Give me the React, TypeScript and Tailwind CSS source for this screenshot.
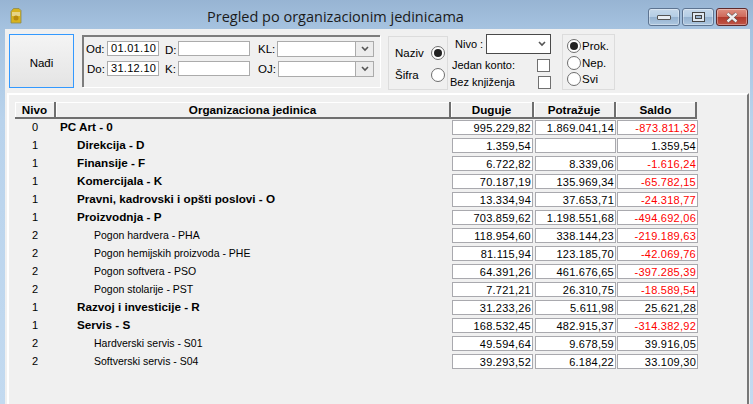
import type { ReactNode } from 'react'

const rows = [
  { n: '0', name: 'PC Art - 0', lvl: 0, d: '995.229,82', p: '1.869.041,14', s: '-873.811,32' },
  { n: '1', name: 'Direkcija - D', lvl: 1, d: '1.359,54', p: '', s: '1.359,54' },
  { n: '1', name: 'Finansije - F', lvl: 1, d: '6.722,82', p: '8.339,06', s: '-1.616,24' },
  { n: '1', name: 'Komercijala - K', lvl: 1, d: '70.187,19', p: '135.969,34', s: '-65.782,15' },
  { n: '1', name: 'Pravni, kadrovski i opšti poslovi - O', lvl: 1, d: '13.334,94', p: '37.653,71', s: '-24.318,77' },
  { n: '1', name: 'Proizvodnja - P', lvl: 1, d: '703.859,62', p: '1.198.551,68', s: '-494.692,06' },
  { n: '2', name: 'Pogon hardvera - PHA', lvl: 2, d: '118.954,60', p: '338.144,23', s: '-219.189,63' },
  { n: '2', name: 'Pogon hemijskih proizvoda - PHE', lvl: 2, d: '81.115,94', p: '123.185,70', s: '-42.069,76' },
  { n: '2', name: 'Pogon softvera - PSO', lvl: 2, d: '64.391,26', p: '461.676,65', s: '-397.285,39' },
  { n: '2', name: 'Pogon stolarije - PST', lvl: 2, d: '7.721,21', p: '26.310,75', s: '-18.589,54' },
  { n: '1', name: 'Razvoj i investicije - R', lvl: 1, d: '31.233,26', p: '5.611,98', s: '25.621,28' },
  { n: '1', name: 'Servis - S', lvl: 1, d: '168.532,45', p: '482.915,37', s: '-314.382,92' },
  { n: '2', name: 'Hardverski servis - S01', lvl: 2, d: '49.594,64', p: '9.678,59', s: '39.916,05' },
  { n: '2', name: 'Softverski servis - S04', lvl: 2, d: '39.293,52', p: '6.184,22', s: '33.109,30' },
]

function Radio({ on }: { on?: boolean }) {
  return (
    <span className="flex h-[14px] w-[14px] shrink-0 items-center justify-center rounded-full border border-[#6e6e6e] bg-white">
      {on && <span className="h-[8px] w-[8px] rounded-full bg-[#222]" />}
    </span>
  )
}

function Check() {
  return <span className="block h-[13px] w-[13px] border border-[#707070] bg-white" />
}

function TextBox({ w, children }: { w: string; children?: ReactNode }) {
  return (
    <div className={`${w} flex h-[15px] items-center border border-[#ababab] bg-white pl-[3px] tracking-[0.3px]`}>
      {children}
    </div>
  )
}

function Combo({ w }: { w: string }) {
  return (
    <div className={`${w} mt-[1px] flex h-[16px] border border-[#ababab] bg-white`}>
      <div className="flex-1" />
      <div className="flex w-[18px] items-center justify-center border-l border-[#ababab] bg-[#ececec]">
        <Chevron />
      </div>
    </div>
  )
}

function Chevron() {
  return (
    <svg width="8" height="6" viewBox="0 0 8 6">
      <path d="M1 1l3 3 3-3" fill="none" stroke="#555" strokeWidth="1.6" />
    </svg>
  )
}

function Head({ w, children }: { w: string; children: ReactNode }) {
  return (
    <div className={`${w} flex h-[17px] items-center justify-center border-r-2 border-b-2 border-[#6f6f6f] bg-[#f0f0f0] text-[11.7px] font-bold shadow-[inset_1px_1px_0_#fff]`}>
      {children}
    </div>
  )
}

function Amount({ v, red }: { v: string; red?: boolean }) {
  return (
    <div className={`flex h-[15px] w-[81px] items-center justify-end border border-[#a9a9ae] bg-white pr-[1px] tracking-[0.25px] ${red ? 'text-[#f00]' : 'text-black'}`}>
      {v}
    </div>
  )
}

function WinBtn({ w, children, red }: { w: string; children: ReactNode; red?: boolean }) {
  return (
    <div className={`${w} flex h-[18px] items-center justify-center rounded-[3px] border ${red ? 'border-[#5e2a2c] bg-[linear-gradient(#dd8f80,#cf6a5b_48%,#b13a2c_52%,#c05548)]' : 'border-[#5d7491] bg-[linear-gradient(#c6d8ea,#b4cde5_48%,#95b2d0_52%,#adc7e0)]'} shadow-[inset_0_0_0_1px_rgba(255,255,255,0.35)]`}>
      {children}
    </div>
  )
}

export default function App() {
  return (
    <div
      className="flex h-[404px] w-[753px] flex-col overflow-hidden bg-[linear-gradient(#97b4d3,#a6c3e0_29px,#b9d3ec_120px,#c3daf0)] text-[11px] leading-[14px] text-black"
      style={{ fontFamily: '"Liberation Sans", Arial, sans-serif' }}
    >
      {/* title bar */}
      <div className="flex h-[29px] shrink-0 items-center">
        <svg className="ml-[10px] mt-[3px]" width="12" height="16" viewBox="0 0 12 16">
          <path d="M1 3.5L3.5.5H9l2 2v12.5H1z" fill="#d8b31e" stroke="#8a8a50" strokeWidth=".8" />
          <path d="M2 4h8v4H2z" fill="#e6d486" />
          <circle cx="6" cy="10" r="2.5" fill="#b78a10" />
        </svg>
        <div className="ml-[185px] mt-[6px] text-[14.5px] leading-none text-[#1b1b1b]" style={{ fontFamily: '"Open Sans", sans-serif' }}>
          Pregled po organizacionim jedinicama
        </div>
        <div className="ml-auto mr-[5px] flex gap-[2px] self-start pt-[8px]">
          <WinBtn w="w-[32px]">
            <span className="h-[5px] w-[14px] rounded-[1px] border border-[#555] bg-[#e8edf3]" />
          </WinBtn>
          <WinBtn w="w-[32px]">
            <span className="flex h-[10px] w-[13px] items-center justify-center border border-[#444] bg-[#dfe8f1]">
              <span className="h-[4px] w-[7px] border border-[#444] bg-[#9db6d0]" />
            </span>
          </WinBtn>
          <WinBtn w="w-[32px]" red>
            <svg width="14" height="11" viewBox="0 0 14 11">
              <path d="M2.5 1.5l9 8M11.5 1.5l-9 8" stroke="#444" strokeWidth="3.6" />
              <path d="M2.5 1.5l9 8M11.5 1.5l-9 8" stroke="#f1eeee" strokeWidth="2.4" />
            </svg>
          </WinBtn>
        </div>
      </div>

      {/* content */}
      <div className="ml-[5px] mr-[3px] flex flex-1 flex-col bg-[#f0f0f0]">
        {/* filter bar */}
        <div className="flex h-[64px] shrink-0 pt-[5px]">
          <button className="ml-[4px] h-[54px] w-[65px] border border-[#3399ff] bg-[linear-gradient(#f4f4f4,#e4e4e4)] pt-[3px] text-[11.5px]">Nađi</button>

          <div className="ml-[8px] mt-[1px] h-[52px] w-[298px] border-t-2 border-l-2 border-[#7d7d7d] pt-[1px] pl-[2px] shadow-[1px_1px_0_#fff]">
            <div className="flex h-[20px] items-center">
              <span className="w-[21px] pt-[2px] text-[11.5px]">Od:</span>
              <TextBox w="w-[52px]">01.01.10</TextBox>
              <span className="ml-[6px] w-[13px] pt-[4px] text-[11.5px]">D:</span>
              <TextBox w="w-[72px]" />
              <span className="ml-[8px] w-[19px] pt-[2px] text-[11.5px]">KL:</span>
              <Combo w="w-[97px]" />
            </div>
            <div className="flex h-[20px] items-center">
              <span className="w-[21px] pt-[2px] pl-[1px] text-[11.5px]">Do:</span>
              <TextBox w="w-[52px]">31.12.10</TextBox>
              <span className="ml-[6px] w-[13px] pt-[2px] text-[11.5px]">K:</span>
              <TextBox w="w-[72px]" />
              <span className="ml-[8px] w-[20px] pt-[2px] text-[11.5px]">OJ:</span>
              <Combo w="w-[96px]" />
            </div>
          </div>

          <div className="ml-[8px] mt-[2px] h-[54px] w-[60px] border border-[#dcdcdc] pl-[6px]">
            <div className="mt-[9px] flex items-center gap-[9px] text-[11.5px]">
              <span className="w-[27px]">Naziv</span>
              <Radio on />
            </div>
            <div className="mt-[8px] flex items-center gap-[9px] text-[11.5px]">
              <span className="w-[27px]">Šifra</span>
              <Radio />
            </div>
          </div>

          <div className="w-[110px] text-[11px]">
            <div className="flex items-center">
              <span className="ml-[7px] w-[31px]">Nivo :</span>
              <div className="flex h-[20px] w-[65px] items-center justify-end border border-[#4a4a4a] bg-white pr-[4px]">
                <Chevron />
              </div>
            </div>
            <div className="mt-[4px] flex items-center">
              <span className="ml-[4px] w-[85px]">Jedan konto:</span>
              <Check />
            </div>
            <div className="mt-[3px] flex items-center">
              <span className="ml-[2px] w-[88px]">Bez knjiženja</span>
              <Check />
            </div>
          </div>

          <div className="ml-[4px] h-[56px] w-[53px] border border-[#dcdcdc] pt-[3px] pl-[4px] text-[11.5px]">
            <div className="flex h-[16.5px] items-center gap-[1px]"><Radio on />Prok.</div>
            <div className="flex h-[16.5px] items-center gap-[1px]"><Radio />Nep.</div>
            <div className="flex h-[16.5px] items-center gap-[1px]"><Radio />Svi</div>
          </div>
        </div>

        {/* table */}
        <div className="ml-[2px] mr-[1px] flex-1 border-t-2 border-l-2 border-r-2 border-t-white border-l-white border-r-[#777] pt-[7px] pl-[6px]">
          <div className="flex">
            <Head w="w-[41px]">Nivo</Head>
            <Head w="w-[395px]">Organizaciona jedinica</Head>
            <Head w="w-[83px]">Duguje</Head>
            <Head w="w-[82px]">Potražuje</Head>
            <Head w="w-[81px]">Saldo</Head>
          </div>
          <div className="mt-[1px]">
            {rows.map((r, i) => (
              <div key={i} className="flex h-[18px]">
                <div className="w-[40px] text-center">{r.n}</div>
                <div className={`w-[397px] ${r.lvl === 0 ? 'pl-[5px] text-[11.7px] font-bold' : r.lvl === 1 ? 'pl-[22px] text-[11.7px] font-bold' : 'pl-[39px] text-[10.5px]'}`}>{r.name}</div>
                <div className="flex gap-[2px]">
                  <Amount v={r.d} />
                  <Amount v={r.p} />
                  <div className="-ml-[1px]">
                    <Amount v={r.s} red={r.s.startsWith('-')} />
                  </div>
                </div>
              </div>
            ))}
          </div>
        </div>
      </div>
    </div>
  )
}
